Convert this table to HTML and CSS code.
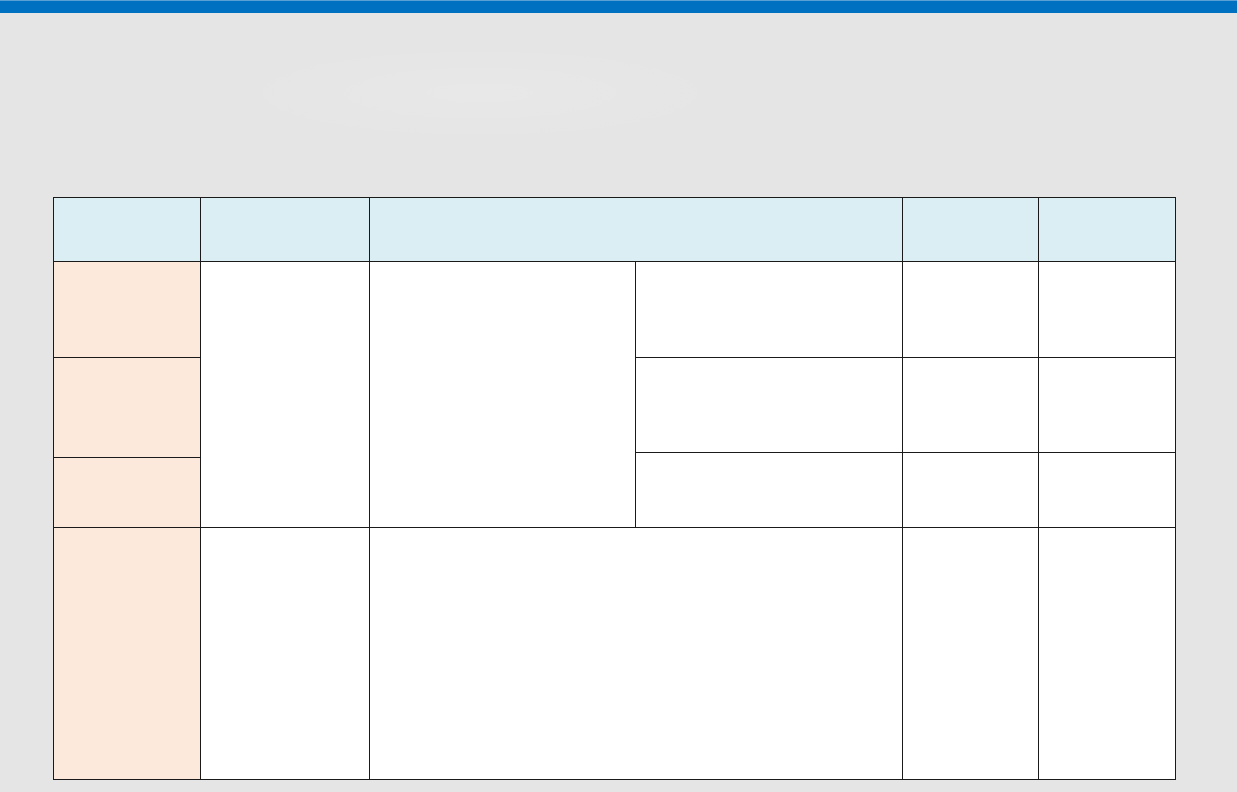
FILE: index.html
```html
<!DOCTYPE html>
<html lang="en">
	<head>
		<meta charset="utf-8">
		<meta name="viewport" content="width=device-width, initial-scale=1.0">
		<title>Table</title>
		<link rel="stylesheet" href="styles.css">
	</head>
	<body>
		<div class="topbar"></div>
		<div class="page">
			<div class="sheet">
				<!-- header -->
				<div class="cell head c1"></div>
				<div class="cell head c2"></div>
				<div class="cell head c34"></div>
				<div class="cell head c5"></div>
				<div class="cell head c6"></div>

				<!-- left labels -->
				<div class="cell label r2 c1"></div>
				<div class="cell label r34 c1"></div>
				<div class="cell label r5 c1"></div>

				<!-- spanning block -->
				<div class="cell r2to5 c2"></div>
				<div class="cell r2to5 c3"></div>

				<!-- right rows -->
				<div class="cell r2 c4"></div>
				<div class="cell r2 c5"></div>
				<div class="cell r2 c6"></div>
				<div class="cell r3 c4"></div>
				<div class="cell r3 c5"></div>
				<div class="cell r3 c6"></div>
				<div class="cell r45 c4"></div>
				<div class="cell r45 c5"></div>
				<div class="cell r45 c6"></div>

				<!-- last row -->
				<div class="cell label r6 c1"></div>
				<div class="cell r6 c2"></div>
				<div class="cell r6 c34"></div>
				<div class="cell r6 c5"></div>
				<div class="cell r6 c6"></div>
			</div>
		</div>
	</body>
</html>
```

FILE: styles.css
```css
body {
	margin: 0;
	background-color: #e5e5e5;
	font-family: 'Liberation Sans', sans-serif;
}
.topbar {
	height: 12px;
	background-color: #0070c0;
	border-top: 1px solid #5a9fd6;
}
.page {
	padding: 184px 0 0 53px;
	height: 595px;
	background:
		radial-gradient(ellipse 260px 50px at 480px 80px, rgba(255,255,255,0.12), transparent),
		#e5e5e5;
}
.sheet {
	display: grid;
	width: 1121px;
	grid-template-columns: 146px 168px 265px 266px 135px 136px;
	grid-template-rows: 63px 95px 94px 4px 69px 251px;
	gap: 1px;
	background-color: #1a1a1a;
	border: 1px solid #1a1a1a;
}
.cell {
	background-color: #ffffff;
}
.head {
	grid-row: 1;
	background-color: #daeef3;
}
.label {
	background-color: #fde9db;
}
.c1 { grid-column: 1; }
.c2 { grid-column: 2; }
.c3 { grid-column: 3; }
.c4 { grid-column: 4; }
.c5 { grid-column: 5; }
.c6 { grid-column: 6; }
.c34 { grid-column: 3 / 5; }
.r2 { grid-row: 2; }
.r3 { grid-row: 3; }
.r34 { grid-row: 3 / 5; }
.r45 { grid-row: 4 / 6; }
.r5 { grid-row: 5; }
.r6 { grid-row: 6; }
.r2to5 { grid-row: 2 / 6; }
```
